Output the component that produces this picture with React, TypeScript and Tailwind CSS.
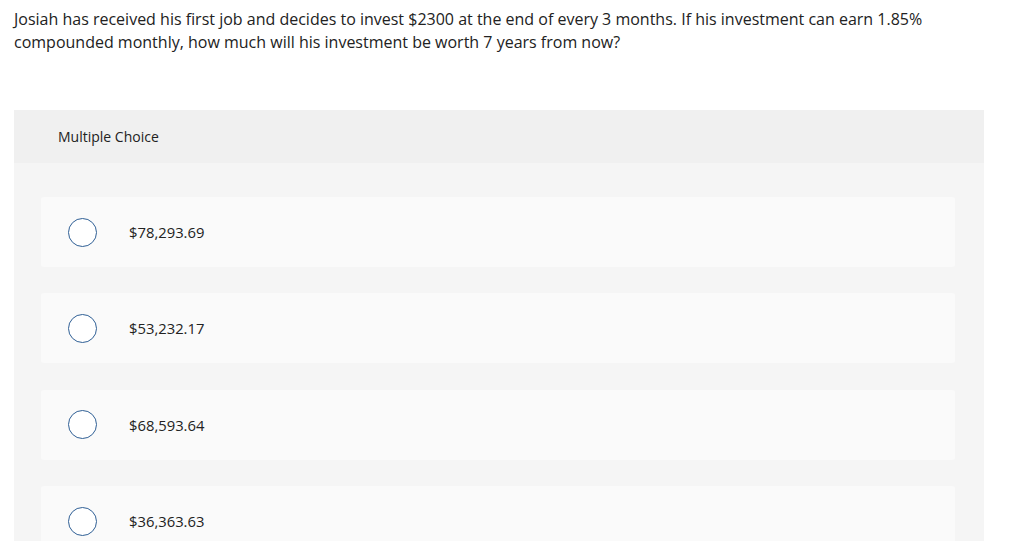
export default function App() {
  const choices = ["$78,293.69", "$53,232.17", "$68,593.64", "$36,363.63"];

  return (
    <div className="h-[552px] bg-white">
      <main className="h-[541px] overflow-hidden bg-white text-[#222] font-['Open_Sans',sans-serif]">
        <p className="px-[14px] pt-[8px] text-[16px] leading-[23px] w-[960px]">
          Josiah has received his first job and decides to invest $2300 at the end of every 3 months. If his investment
          can earn 1.85% compounded monthly, how much will his investment be worth 7 years from now?
        </p>

        <section className="mt-[56px] ml-[14px] w-[970px] bg-[#f5f5f5]">
          <div className="h-[53px] bg-[#f0f0f0] pl-[44px] flex items-center text-[14px]">Multiple Choice</div>
          <div className="pt-[34px] pl-[27px] pr-[29px] flex flex-col gap-[26.4px]">
            {choices.map((c) => (
              <div key={c} className="h-[70px] rounded-[3px] bg-[#fafafa] flex items-center pl-[27px]">
                <span className="w-[29px] h-[29px] rounded-full border-[1.5px] border-[#2f5f95] bg-white shrink-0" />
                <span className="ml-[32px] text-[14.8px]">{c}</span>
              </div>
            ))}
          </div>
        </section>
      </main>
    </div>
  );
}
